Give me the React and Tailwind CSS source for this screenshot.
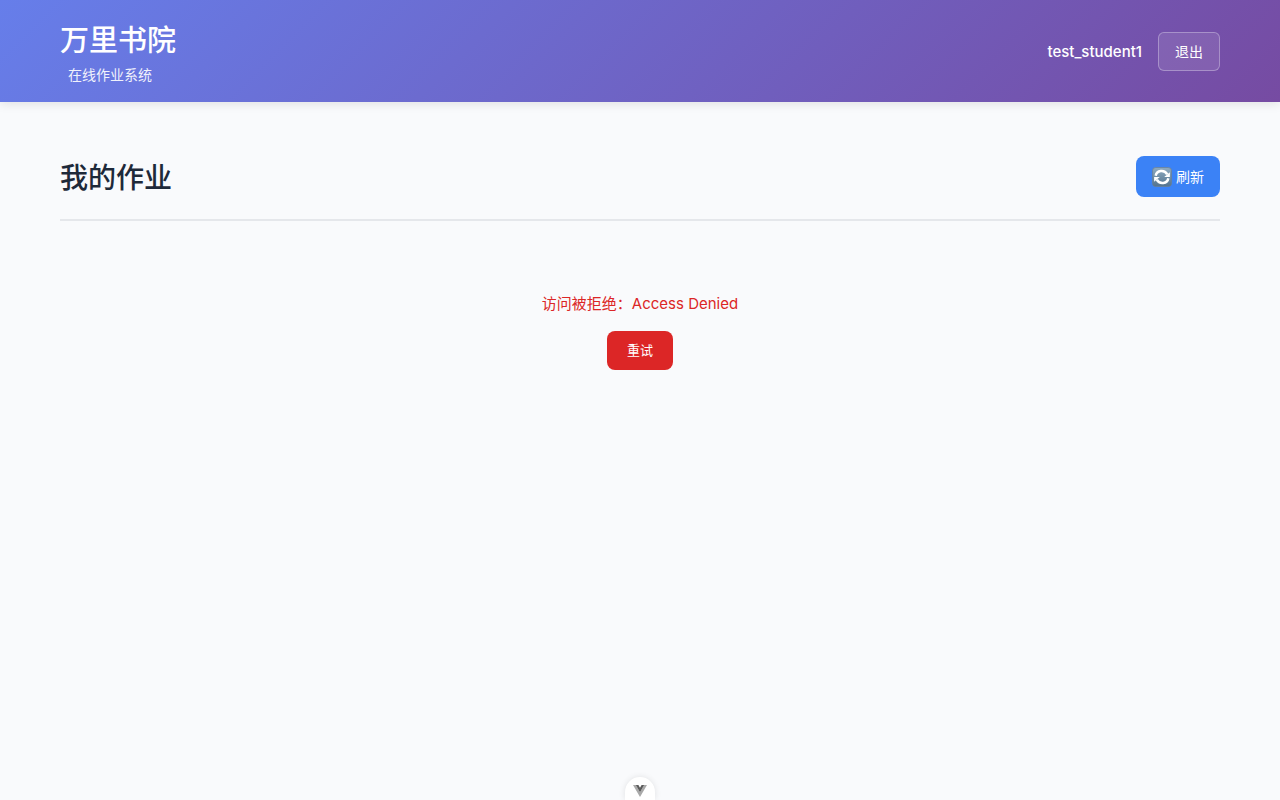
function RefreshIcon() {
  return (
    <svg viewBox="0 0 20 20" className="h-5 w-5 shrink-0" aria-hidden="true">
      <defs>
        <linearGradient id="refresh-tile" x1="0" y1="0" x2="0" y2="1">
          <stop offset="0" stopColor="#8fabc0" />
          <stop offset="1" stopColor="#53738f" />
        </linearGradient>
      </defs>
      <rect x="0.5" y="0.5" width="19" height="19" rx="3.2" fill="url(#refresh-tile)" stroke="#6d7f90" strokeWidth="0.7" />
      <g fill="none" stroke="#fff" strokeWidth="2.5">
        <path d="M3.7 8.8C4.6 3.2 12.4 2.2 15.2 7.3" />
        <path d="M16.3 11.2C15.4 16.8 7.6 17.8 4.8 12.7" />
      </g>
      <path d="M17.9 5.2V10.1H12.2Z" fill="#fff" />
      <path d="M2.1 14.8V9.9H7.8Z" fill="#fff" />
    </svg>
  );
}

function VueMark() {
  return (
    <svg viewBox="0 0 14 12" className="h-3 w-3.5" aria-hidden="true">
      <path d="M0 0H2.8L7 7.3 11.2 0H14L7 12Z" fill="#a9a9a9" />
      <path d="M2.8 0H5.4L7 2.8 8.6 0H11.2L7 7.3Z" fill="#5c5c5c" />
    </svg>
  );
}

function Header() {
  return (
    <header className="bg-[linear-gradient(135deg,#667eea_0%,#764ba2_100%)] pt-[17px] pb-4 text-white shadow-[0_2px_10px_rgba(0,0,0,0.1)]">
      <div className="mx-auto flex max-w-[1200px] items-center justify-between px-5">
        <div>
          <h1 className="text-[29px] leading-[47px] font-medium">万里书院</h1>
          <p className="ml-2 text-sm leading-[22px] opacity-90">在线作业系统</p>
        </div>
        <div className="flex items-center gap-4">
          <span className="text-[15px] leading-6 font-medium">test_student1</span>
          <button type="button" className="rounded-md border border-white/30 bg-white/10 px-4 py-2 text-sm leading-[21px]">
            退出
          </button>
        </div>
      </div>
    </header>
  );
}

export default function App() {
  return (
    <div className="flex min-h-screen flex-col bg-[#f9fafc] font-['Inter','Noto_Sans_CJK_SC',sans-serif]">
      <Header />
      <main className="mx-auto w-full max-w-[1200px] grow px-5 pt-[54px]">
        <div className="flex items-start justify-between border-b-2 border-gray-200 pb-[19px]">
          <h2 className="text-[28px] leading-11 font-medium text-gray-800">我的作业</h2>
          <button type="button" className="flex items-center gap-1 rounded-lg bg-[#3b82f6] px-4 py-2.5 text-sm leading-[21px] text-white">
            <RefreshIcon />
            刷新
          </button>
        </div>
        <div className="flex flex-col items-center gap-[15px] pt-[71px]" role="alert">
          <p className="text-[15px] leading-6 text-[#dc2626]">访问被拒绝：Access Denied</p>
          <button type="button" className="rounded-lg bg-[#dc2626] px-5 py-2.5 text-[13px] leading-[19px] text-white">
            重试
          </button>
        </div>
      </main>
      <footer className="flex justify-center">
        <button
          type="button"
          aria-label="Toggle devtools"
          className="flex h-[23px] w-[30px] items-center justify-center rounded-t-full bg-white pt-1 shadow-[0_0_6px_rgba(0,0,0,0.1)]"
        >
          <VueMark />
        </button>
      </footer>
    </div>
  );
}
